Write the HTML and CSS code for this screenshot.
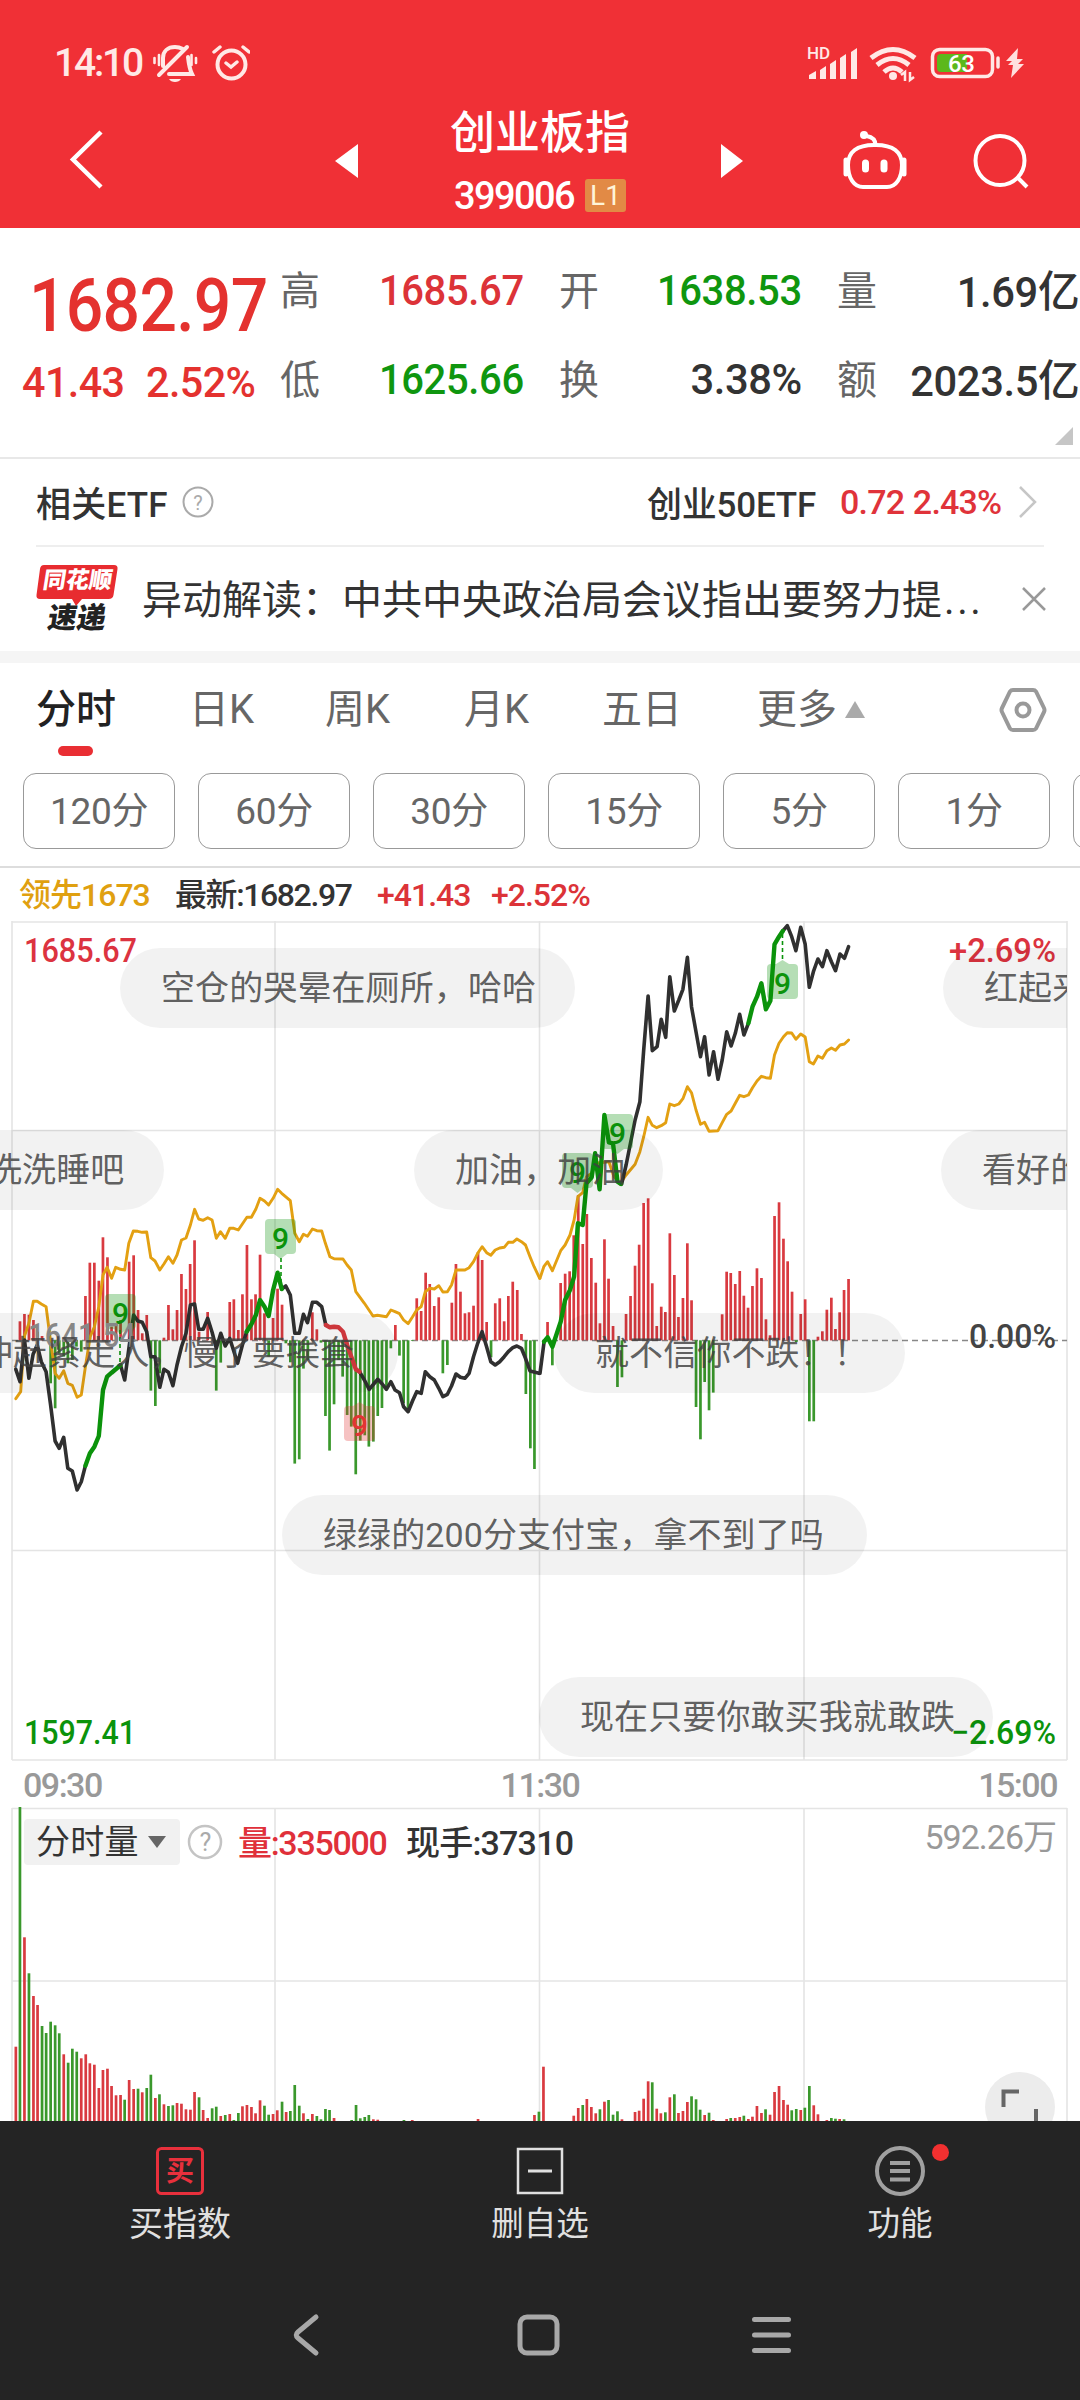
FILE: index.html
```html
<!DOCTYPE html>
<html lang="zh-CN">
<head>
<meta charset="utf-8">
<title>创业板指 399006</title>
<link rel="stylesheet" href="styles.css">
</head>
<body>
<header class="header">
  <div class="status">
    <span class="clock">14:10</span>
    <svg class="status-left" width="100" height="42" viewBox="150 42 100 42" fill="none" stroke="#ffe9e6" stroke-width="3.4" stroke-linecap="round">
      <path d="M163 66V58c0-7 5-11 12-11 3 0 6 1 8 2M188 57c1 9 2 13 4 17H169M159 75l28-28" stroke-width="4"/>
      <path d="M169 79h12c-2 4-10 4-12 0z" fill="#ffe9e6" stroke="none"/>
      <path d="M154.500 58v5M159 55v10M191.500 55v10M196 58v5" stroke-width="2.600"/>
      <circle cx="231.500" cy="64.500" r="14" stroke-width="4"/>
      <path d="M226 63l5 4 6-5M214 52l6-5M249 52l-6-5"/>
    </svg>
    <svg class="status-right" width="225" height="44" viewBox="802 42 225 44">
      <text x="807" y="59" class="hd" textLength="23">HD</text>
      <path fill="#ffe9e6" d="M809 79v-4l7-4v8zM820 79v-9l6-4v13zM830 79V64l6-4v19zM840 79V58l6-4v25zM851 79V52l6-4v31z"/>
      <g fill="none" stroke="#ffe9e6" stroke-width="5"><path d="M871 58q22-17 44 0"/><path d="M877 65q16-13 32 0"/><path d="M884 72q9-8 18 0"/></g>
      <circle cx="893" cy="76" r="4" fill="#ffe9e6"/>
      <path d="M901 75l4-3v9M910 72v8l4-3" stroke="#ffe9e6" stroke-width="2.500" fill="none"/>
      <rect x="932.500" y="49.500" width="60" height="27" rx="7" fill="none" stroke="#ffe9e6" stroke-width="3.500"/>
      <path d="M941 54h26v18h-26q-4 0-4-4v-10q0-4 4-4z" fill="#5cb81c"/>
      <text x="948" y="71.500" class="battery" textLength="27">63</text>
      <path d="M998 58v9" stroke="#ffe9e6" stroke-width="3.500" stroke-linecap="round"/>
      <path d="M1018 48l-12 13h6l-4 4h5l-2 13 13-14h-6l5-5h-6z" fill="#ffe0de"/>
    </svg>
  </div>
  <div class="titlebar">
    <svg class="back" width="36" height="62" viewBox="68 128 36 62" fill="none" stroke="#fff" stroke-width="4.500"><path d="M101 132L73 159.500 101 187"/></svg>
    <svg class="prev" width="24" height="36" viewBox="0 0 24 36"><path fill="#fff" d="M23 1v34L0 18z"/></svg>
    <div class="title">
      <h1>创业板指</h1>
      <div class="code"><span class="code-num">399006</span><span class="level">L1</span></div>
    </div>
    <svg class="next" width="24" height="36" viewBox="0 0 24 36"><path fill="#fff" d="M1 1v34l22-17z"/></svg>
    <svg class="robot" width="68" height="64" viewBox="841 128 68 64" fill="none" stroke="#fff" stroke-width="4">
      <path d="M848 165c0-13 9-20 26-20h2c17 0 26 7 26 20s-6 22-15 22h-24c-9 0-15-9-15-22z"/>
      <path d="M875.500 145c0-5-3-8-9-9"/><circle cx="864" cy="135" r="4" fill="#fff" stroke="none"/>
      <path d="M846 160v14M904 160v14" stroke-width="5" stroke-linecap="round"/>
      <path d="M865.500 163v6M884 163v6" stroke-width="7" stroke-linecap="round"/>
    </svg>
    <svg class="search" width="60" height="60" viewBox="970 131 60 60" fill="none" stroke="#fff" stroke-width="4"><circle cx="1000" cy="160.500" r="24.500"/><path d="M1017 177l10 10"/></svg>
  </div>
</header>

<section class="quote">
  <div class="last">
    <div class="price"><span class="num">1682.97</span></div>
    <div class="delta"><span class="num">41.43</span><span class="num">2.52%</span></div>
  </div>
  <dl class="stats">
    <div><dt>高</dt><dd class="up"><span class="num">1685.67</span></dd></div>
    <div><dt>开</dt><dd class="down"><span class="num">1638.53</span></dd></div>
    <div><dt>量</dt><dd><span class="num wide">1.69亿</span></dd></div>
    <div><dt>低</dt><dd class="down"><span class="num">1625.66</span></dd></div>
    <div><dt>换</dt><dd><span class="num wide">3.38%</span></dd></div>
    <div><dt>额</dt><dd><span class="num wide">2023.5亿</span></dd></div>
  </dl>
  <i class="corner"></i>
</section>

<section class="etf">
  <span class="etf-label">相关ETF</span>
  <svg width="32" height="32" viewBox="0 0 32 32"><circle cx="16" cy="16" r="14.500" fill="none" stroke="#aaa" stroke-width="2"/><text x="16" y="23.500" class="q">?</text></svg>
  <span class="etf-name">创业50ETF</span>
  <span class="etf-num">0.72 2.43%</span>
  <svg class="chev" width="20" height="34" viewBox="0 0 20 34" fill="none" stroke="#c6c6c6" stroke-width="2.500"><path d="M2 2l15 15L2 32"/></svg>
</section>

<section class="news">
  <div class="logo">
    <svg class="logo-box" width="82" height="42" viewBox="0 0 82 42"><path fill="#e82c30" d="M8 0h70q4 0 3.500 4l-4 26q-.5 4-5 4H46l-6 7-4-7H4q-4 0-3.500-4L4 4q.5-4 4-4z"/></svg>
    <b class="logo-top">同花顺</b><b class="logo-bottom">速递</b>
  </div>
  <p>异动解读：中共中央政治局会议指出要努力提<span class="dots">...</span></p>
  <svg class="close" width="24" height="24" viewBox="0 0 24 24" stroke="#999" stroke-width="2.500"><path d="M1 1l22 22M23 1L1 23"/></svg>
</section>

<nav class="tabs">
  <span class="tab active">分时</span><span class="tab">日K</span><span class="tab">周K</span><span class="tab">月K</span><span class="tab">五日</span>
  <span class="tab more">更多<i></i></span>
  <svg width="48" height="46" viewBox="0 0 48 46" fill="none" stroke="#999" stroke-width="4"><path d="M14 3h20q2 0 3 1.500l8 16.500q1 2 0 4l-8 16.500q-1 1.500-3 1.500H14q-2 0-3-1.500L3 25q-1-2 0-4l8-16.500Q12 3 14 3z"/><circle cx="24" cy="23" r="6.500"/></svg>
</nav>
<nav class="periods"><span>120分</span><span>60分</span><span>30分</span><span>15分</span><span>5分</span><span>1分</span><span></span></nav>

<main>
  <div class="legend">
    <span class="lead">领先1673</span><span class="newest">最新:1682.97</span><span class="chg">+41.43</span><span class="pct">+2.52%</span>
  </div>
  <div class="minute">
    <svg class="plot" id="minute" width="1080" height="840" viewBox="0 921 1080 840"></svg>
    <div class="danmaku">
      <span style="left:120px;top:27px;width:455px">空仓的哭晕在厕所，哈哈</span>
      <span style="left:943px;top:27px;width:300px">红起来</span>
      <span style="left:-53px;top:209px;width:217px">洗洗睡吧</span>
      <span style="left:414px;top:209px;width:249px">加油，加油</span>
      <span style="left:941px;top:209px;width:300px">看好的</span>
      <span style="left:-62px;top:392px;width:460px">冲赶紧走人，慢了要挨套</span>
      <span style="left:554px;top:392px;width:351px">就不信你不跌！！</span>
      <span style="left:282px;top:574px;width:585px">绿绿的200分支付宝，拿不到了吗</span>
      <span style="left:539px;top:756px;width:454px">现在只要你敢买我就敢跌</span>
    </div>
  </div>
  <div class="times"><span>09:30</span><span>11:30</span><span>15:00</span></div>
  <div class="volume">
    <svg class="plot" id="volume" width="1080" height="314" viewBox="0 1807 1080 314"></svg>
    <div class="volbar">
      <span class="select">分时量<i></i></span>
      <svg width="36" height="36" viewBox="0 0 36 36"><circle cx="18" cy="18" r="16" fill="none" stroke="#c4c4c4" stroke-width="2.500"/><text x="18" y="27" class="q big">?</text></svg>
      <span class="vol">量:335000</span><span class="hand">现手:37310</span><span class="max">592.26万</span>
    </div>
    <svg class="expand" width="70" height="70" viewBox="0 0 70 70"><circle cx="35" cy="35" r="35" fill="#ececec"/><path d="M18.500 35V19.500H34M51 37v15H36" fill="none" stroke="#666" stroke-width="4"/></svg>
  </div>
</main>

<footer class="footer">
  <div class="actions">
    <div class="action buy"><svg width="50" height="50" viewBox="0 0 50 50"><rect x="2.500" y="2.500" width="45" height="45" rx="4" fill="none" stroke="#e8303c" stroke-width="3"/><text x="25" y="35" class="buy-glyph">买</text></svg><span>买指数</span></div>
    <div class="action"><svg width="50" height="50" viewBox="0 0 50 50" fill="none" stroke="#e0e0e0"><rect x="3" y="3" width="44" height="44" stroke-width="2.500"/><path d="M13 25h24" stroke-width="3"/></svg><span>删自选</span></div>
    <div class="action"><svg width="50" height="50" viewBox="0 0 50 50" fill="none" stroke="#a0a0a0"><circle cx="25" cy="25" r="23" stroke-width="4"/><path d="M15 17h20M15 25h20M15 33.500h20" stroke-width="4"/></svg><span>功能</span><i class="dot"></i></div>
  </div>
  <div class="sysnav">
    <svg width="500" height="46" viewBox="292 2312 500 46" fill="none" stroke="#a8a8a8" stroke-width="5" stroke-linecap="round"><path d="M317 2317l-18 15q-3.500 3 0 6l18 15" stroke-linejoin="round"/><rect x="521" y="2317" width="37" height="36" rx="7"/><path d="M755.500 2319.500h34M755.500 2335h34M755.500 2350.500h34"/></svg>
  </div>
</footer>
<script src="chart.js"></script>
</body>
</html>
```
FILE: styles.css
```css
* { box-sizing: border-box; margin: 0; padding: 0; }
body { width: 1080px; height: 2400px; overflow: hidden; background: #fff; color: #333; font-family: Roboto, "Noto Sans CJK SC", sans-serif; display: flex; flex-direction: column; }
svg { display: block; flex: none; }
span, p { white-space: nowrap; }
.up { color: #dc3338; }
.down { color: #0f960f; }
.header { height: 228px; flex: none; background: #f03036; color: #fff; }
.status { height: 86px; padding: 42px 53px 0 54px; display: flex; align-items: flex-start; }
.clock { font-size: 39px; line-height: 43px; letter-spacing: -2.2px; color: #ffe9e6; width: 96px; font-weight: 500; }
.status-right { margin-left: auto; }
.hd { font: 500 17px Roboto; fill: #ffe9e6; }
.battery { font: 500 24px Roboto; fill: #fff; }
.titlebar { height: 142px; display: flex; align-items: flex-start; }
.back { margin: 42px 0 0 68px; }
.prev { margin: 57px 0 0 231px; }
.title { width: 362px; text-align: center; margin-top: 21px; }
.title h1 { font-size: 45px; line-height: 54px; font-weight: 500; }
.code { display: flex; justify-content: center; align-items: center; gap: 11px; height: 32px; margin-top: 18px; }
.code-num { font-size: 38px; letter-spacing: -1.6px; font-weight: 500; line-height: 32px; position: relative; top: 1px; }
.level { width: 41px; height: 33px; border-radius: 3px; background: #e28a45; font-size: 28px; line-height: 33px; color: #fff4d8; }
.next { margin: 57px 0 0 -1px; }
.robot { margin: 42px 0 0 97px; }
.search { margin: 45px 0 0 61px; }
.quote { height: 231px; flex: none; border-bottom: 2px solid #e8e8e8; display: flex; position: relative; }
.last { width: 280px; color: #e4322f; font-weight: 500; }
.num { display: inline-block; transform: scaleX(.93); transform-origin: right; }
.num.wide { transform: scaleX(.97); }
.price { height: 108px; margin-top: 23px; padding-left: 29px; font-size: 75px; line-height: 108px; letter-spacing: -.8px; }
.price .num { transform: scaleX(.88); transform-origin: left; }
.delta { display: flex; height: 46px; line-height: 46px; font-size: 43px; padding-left: 22px; gap: 17px; }
.delta .num { transform: scaleX(.96); transform-origin: left; letter-spacing: -.6px; }
.stats { width: 800px; display: grid; grid-template-columns: 243px 278px 279px; column-gap: 0; grid-template-rows: 89px 89px; padding-top: 17px; }
.stats div { display: flex; justify-content: space-between; align-items: center; }
.stats div:nth-child(3n+2) { padding-left: 36px; }
.stats div:nth-child(3n) { padding-left: 36px; }
.stats dt { font-size: 40px; color: #666; position: relative; top: -2px; }
.stats dd { font-size: 43px; font-weight: 500; letter-spacing: -.4px; margin-right: -1px; }
.stats div:nth-child(3n) dd { margin-right: 1px; position: relative; top: -2px; }
.corner { position: absolute; right: 7px; bottom: 12px; border-left: 18px solid transparent; border-bottom: 18px solid #c6c6c6; }
.etf { height: 88px; flex: none; margin: 0 36px; border-bottom: 2px solid #eee; display: flex; align-items: center; font-size: 34px; }
.etf-label { width: 146px; }
.etf-label, .etf-name { font-weight: 500; font-size: 35px; letter-spacing: .2px; position: relative; top: -1px; }
.etf-name { margin-left: auto; letter-spacing: -.2px; }
.etf-num { color: #e0333a; font-weight: 500; width: 158px; margin-left: 24px; letter-spacing: -.8px; word-spacing: 1px; }
.chev { margin: 0 6px 0 20px; }
.news { height: 116px; flex: none; border-bottom: 12px solid #f5f5f5; display: flex; align-items: center; padding-left: 36px; }
.logo { width: 82px; height: 70px; position: relative; display: flex; flex-direction: column; align-items: center; }
.logo-box { position: absolute; left: 0; top: 1px; }
.logo b { position: relative; transform: skewX(-9deg); font-weight: 900; white-space: nowrap; }
.logo-top { color: #fff; font-size: 23px; line-height: 34px; }
.logo-bottom { color: #222; font-size: 29px; line-height: 32px; margin-top: 4px; }
.news p { font-size: 40px; margin: -5px 0 0 24px; width: 840px; }
.dots { letter-spacing: 2.6px; margin-left: 2px; }
.close { margin-left: 40px; }
.tabs { height: 92px; flex: none; display: flex; align-items: center; padding-left: 36px; font-size: 40px; color: #666; }
.tab { height: 92px; line-height: 93px; width: 137px; position: relative; }
.tab:nth-child(1) { width: 153px; }
.tab:nth-child(2) { width: 136px; }
.tab:nth-child(3) { width: 139px; }
.tab:nth-child(4) { width: 138px; }
.tab:nth-child(5) { width: 155px; }
.tab.active { color: #222; font-weight: 500; }
.tab.active::after { content: ""; position: absolute; left: 22px; bottom: -1px; width: 35px; height: 10px; border-radius: 5px; background: #e92e33; }
.more { width: 241px; display: flex; align-items: center; gap: 8px; }
.more i { border: 10px solid transparent; border-top: 0; border-bottom: 17px solid #aaa; }
.tabs svg { position: relative; left: 1px; top: 1px; }
.periods { height: 113px; flex: none; border-bottom: 2px solid #ddd; display: flex; gap: 23px; padding: 18px 0 0 23px; overflow: hidden; }
.periods span { width: 152px; height: 76px; flex: none; border: 1.5px solid #999; border-radius: 13px; text-align: center; font-size: 37px; line-height: 75px; color: #666; letter-spacing: -.3px; }
main { flex: none; height: 1253px; overflow: hidden; }
.legend { height: 53px; display: flex; align-items: center; padding-left: 19px; font-size: 32px; line-height: 54px; letter-spacing: -1px; font-weight: 500; }
.lead { width: 156px; color: #e0a010; }
.newest { width: 202px; letter-spacing: -1.4px; }
.chg { width: 114px; }
.chg, .pct { color: #dc3338; }
.minute, .volume { position: relative; }
.minute { height: 840px; }
.plot text { font-family: Roboto, "Noto Sans CJK SC", sans-serif; font-size: 34px; font-weight: 500; }
.danmaku { position: absolute; left: 0; top: 0; width: 1067px; height: 840px; overflow: hidden; }
.danmaku span { position: absolute; height: 80px; line-height: 80px; padding-left: 41px; border-radius: 40px; background: rgba(0,0,0,.05); color: rgba(64,64,64,.84); font-size: 34px; letter-spacing: .1px; }
.times { height: 46px; padding: 0 23px 0 23px; display: flex; justify-content: space-between; font-size: 34px; line-height: 48px; letter-spacing: -1.5px; color: #999; font-weight: 500; }
.volume { height: 314px; }
.volbar { position: absolute; left: 24px; top: 12px; width: 1032px; height: 46px; display: flex; align-items: center; font-size: 34px; font-weight: 500; letter-spacing: -.8px; }
.select { width: 156px; height: 46px; line-height: 46px; border-radius: 4px; background: #f1f1f1; display: flex; align-items: center; gap: 9px; padding-left: 12px; margin-right: 7px; letter-spacing: .2px; font-weight: 400; }
.select i { border: 9px solid transparent; border-bottom: 0; border-top: 12px solid #666; }
.vol, .hand { position: relative; top: -2px; }
.vol { color: #e0303a; margin-left: 15px; width: 168px; letter-spacing: -1.3px; }
.max { margin-left: auto; color: #999; font-weight: 400; position: relative; top: -8px; letter-spacing: -1px; }
.q { font: 20px Roboto; fill: #aaa; text-anchor: middle; }
.plot + .volbar .big { font-size: 25px; }
.expand { position: absolute; left: 985px; top: 265px; }
.footer { flex: 1; background: #242424; color: #e0e0e0; }
.actions { height: 150px; display: grid; grid-template-columns: 360px 360px 360px; }
.action { display: flex; flex-direction: column; align-items: center; padding-top: 25px; font-size: 32.5px; line-height: 50px; gap: 3px; position: relative; }
.action.buy { font-size: 34px; }
.buy-glyph { font: 700 28px "Noto Sans CJK SC"; fill: #e8303c; text-anchor: middle; }
.dot { position: absolute; left: 212px; top: 23px; width: 17px; height: 17px; border-radius: 50%; background: #f23030; }
.sysnav { padding: 41px 0 0 291px; }
```
FILE: chart.js
```js
const RED = '#d93a40', GREEN = '#3a982c', DARK = '#303030', GOLD = '#e3a012', BUY = '#0b930b';
const SX = 540 / 1568, SY = 1 / 3;

// Samples are stored on a fine grid; each half of the session has its own origin.
const px = (ox, x) => (ox + x * SX).toFixed(1);
const py = (oy, y) => (oy + y * SY).toFixed(1);

function line(ox, oy, pts, color, w) {
  const p = pts.split(' ').map(s => { const [x, y] = s.split(','); return px(ox, +x) + ',' + py(oy, +y); }).join(' ');
  return `<polyline points="${p}" fill="none" stroke="${color}" stroke-width="${w}" stroke-linejoin="round" stroke-linecap="round"/>`;
}
function bars(ox, oy, base, data, w = 2.7) {
  let color = RED;
  return data.split(' ').map(s => {
    if (s[0] === 'r') { color = RED; s = s.slice(1); }
    if (s[0] === 'g') { color = GREEN; s = s.slice(1); }
    const [x, y] = s.split(':').map(Number);
    const a = Math.min(y, base), b = Math.max(y, base);
    return `<rect x="${(ox + x * SX - w / 2).toFixed(1)}" y="${py(oy, a)}" width="${w}" height="${((b - a) * SY).toFixed(1)}" fill="${color}"/>`;
  }).join('');
}
const rule = (x1, y1, x2, y2, c = '#e4e4e4', extra = '') => `<path d="M${x1} ${y1}L${x2} ${y2}" stroke="${c}" stroke-width="1.6" ${extra}/>`;
const label = (x, y, len, color, t) => `<text x="${x}" y="${y}" fill="${color}" textLength="${len}" lengthAdjust="spacingAndGlyphs">${t}</text>`;
function nine(x, y, down, color = BUY) {
  const tip = down ? `M${x + 9} ${y + 35}l6.5 5 6.5-5z` : `M${x + 9} ${y}l6.500-4 6.500 4z`;
  return `<g><rect x="${x}" y="${y}" width="31" height="35" rx="4" fill="${color}" opacity=".3"/><path d="${tip}" fill="${color}" opacity=".3"/><text x="${x + 7}" y="${y + 30}" style="font-size:30px" fill="${color}">9</text></g>`;
}

let m = '';
for (const x of [12, 275, 539.5, 804, 1067]) m += rule(x, 921, x, 1760);
for (const y of [922, 1130.5, 1550.5, 1760]) m += rule(12, y, 1067, y);
m += rule(12, 1340.5, 1067, 1340.5, '#888', 'stroke-dasharray="6 4"');
m += bars(0, 1160, 541, 'r58:484 71:462 84:464 97:480 109:515 122:528 g147:670 160:745 172:580 185:590 197:610 210:600 222:560 236:575 r248:408 261:308 274:308 287:362 299:232 312:292 324:500 337:490 350:480 375:305 388:286 401:450 413:520 426:465 g438:692 451:738 464:640 r476:533 489:435 502:508 514:450 527:342 540:387 552:312 565:241 578:515 603:456 g628:692 641:608 r667:426 679:418 692:510 704:403 717:255 730:418 742:403 755:284 768:460 793:474 806:386 819:434 g780:590 830:550 843:607 856:911 869:898 881:626 894:600 r907:457 920:508 g932:548 945:768 957:872 970:733 983:600 995:650 1008:765 1020:800 1033:943 1046:842 1059:826 1071:860 1084:845 1097:768 1109:744 1122:690 1135:565 r1148:495 g1160:587 1172:730 1185:745 1197:543 r1210:415 1223:453 1236:338 1248:372 1261:438 1274:412 g1286:640 1299:615 r1312:428 1324:312 1337:395 1350:460 1362:457 1375:437 1388:277 1400:300 1413:486 g1426:592 r1438:430 1451:415 1464:484 1476:408 1489:365 1502:390 1514:522 g1527:702 1540:865 1552:927');
m += bars(540, 900, 1321, 'r22:1266 g36:1396 r60:1149 73:1121 86:1114 98:1006 111:885 124:1032 136:942 149:1074 162:1148 174:1270 187:1018 199:1136 212:1278 g225:1461 238:1432 r250:1242 263:1188 276:1097 288:1034 301:909 314:895 326:1150 339:1278 352:1220 364:1236 377:1000 390:1125 402:1251 415:1194 428:1030 440:1201 g453:1521 466:1618 478:1446 491:1531 503:1478 r529:1243 542:1115 554:1119 567:1152 580:1113 592:1187 604:1223 617:1158 630:1105 643:1134 656:1258 668:1306 681:948 694:907 707:1016 719:1084 732:1175 757:1242 770:1198 g744:1326 782:1564 795:1564 r807:1310 820:1294 833:1229 846:1193 858:1287 870:1237 883:1170 896:1137');
m += line(0, 1160, '46,716 60,695 71,528 84,490 97,424 108,424 120,432 134,440 147,545 160,640 172,655 185,632 197,670 210,676 224,712 236,705 248,620 262,530 274,500 287,440 299,345 311,322 324,355 336,322 350,328 362,330 374,250 387,213 400,214 413,217 426,216 438,293 450,303 464,330 476,312 489,290 502,310 514,285 527,240 540,234 553,195 565,148 577,177 590,181 603,173 616,180 628,235 640,215 654,235 667,205 679,205 692,210 717,172 730,172 743,147 755,115 768,123 780,135 793,115 806,88 818,100 843,122 856,220 869,245 881,223 893,229 907,207 920,212 934,213 945,250 958,290 970,296 996,297 1008,315 1020,330 1033,395 1058,430 1083,468 1096,466 1122,470 1135,450 1147,455 1160,461 1172,480 1185,491 1198,470 1210,450 1223,440 1235,395 1248,385 1261,387 1274,377 1286,396 1299,395 1311,375 1324,330 1350,330 1362,323 1375,305 1387,280 1400,260 1413,278 1425,286 1438,270 1451,264 1464,262 1476,247 1489,247 1501,237 1514,245 1526,255 1539,290 1551,320 1567,355', GOLD, 2.9);
m += line(540, 900, '0,1135 11,1100 22,1085 36,1112 60,1052 73,1035 87,1005 99,960 110,890 124,878 135,830 150,820 160,790 200,785 215,830 232,852 250,825 276,793 290,755 301,710 314,652 326,676 339,683 352,677 365,668 377,612 390,617 403,612 415,596 428,560 440,578 453,630 466,673 478,667 491,694 504,693 517,692 529,668 542,643 555,633 567,610 580,586 592,590 605,585 617,563 630,543 643,529 656,533 669,535 681,465 694,430 707,410 718,398 731,399 743,418 757,402 770,411 782,485 794,492 807,468 820,475 833,452 846,444 858,451 871,435 884,432 896,420', GOLD, 2.9);
m += rule(281, 1258, 281, 1292, BUY, 'stroke-dasharray="4 3"') + rule(120, 1330, 120, 1364, BUY, 'stroke-dasharray="4 3"') + rule(782.5, 934, 782.5, 960, BUY, 'stroke-dasharray="4 3"');
[
  ['46,628 58,665 71,540 84,655 96,583 108,555 120,605 134,635 147,735 160,843 172,865 185,832 197,925 210,933 224,990 236,965 248,917', DARK],
  ['350,615 362,660 375,560 388,465 400,483 413,487 426,515 438,590 450,590 464,682 476,628 489,637 502,677 514,615 527,560 540,520 553,435 565,432 577,508 590,508 603,475 616,517 628,565 641,520 654,558 667,535 690,610 704,555 716,515', DARK],
  ['818,387 830,378 843,405 856,520 869,520 881,463 893,488 907,427 920,427 934,440 946,495', DARK],
  ['1044,635 1058,660 1072,688 1085,672 1097,658 1110,672 1122,688 1135,665 1147,690 1160,698 1172,740 1185,755 1198,722 1210,695 1223,700 1235,635 1248,650 1261,660 1274,685 1286,710 1299,703 1311,678 1324,642 1337,652 1350,655 1362,640 1375,590 1387,550 1400,515 1413,560 1425,605 1438,615 1451,605 1464,590 1476,575 1489,563 1501,558 1514,565 1526,595 1539,633 1551,636 1565,640', DARK],
  ['248,917 261,880 274,860 287,828 299,690 311,650 324,638 336,628 350,615', BUY],
  ['716,515 730,493 743,465 755,420 768,440 780,468 793,390 806,338 818,387', BUY],
  ['946,495 958,502 970,500 983,502 996,515 1008,555 1020,590 1033,628 1044,635', RED]
].forEach(([p, c]) => { m += line(0, 1160, p, c, c === DARK ? 3.6 : 4.4); });
[
  ['0,1420 12,1325', DARK],
  ['237,852 250,795 276,660 290,605 301,450 314,288 326,452 340,440 352,358 365,412 377,230 390,333 403,300 415,268 428,172 440,320 453,395 466,470 478,410 491,525 504,455 517,538 529,480 542,395 555,438 567,400 580,343 592,405 605,370', DARK],
  ['705,93 718,77 731,110 743,152 757,82 770,133 782,262 794,215 807,177 820,200 833,152 846,185 858,212 871,162 884,175 896,140', DARK],
  ['12,1325 22,1312 36,1340 60,1265 73,1200 87,1170 99,1130 110,970 124,975 135,850 150,832 160,760 173,868 187,645 200,727 212,730 225,845 235,852', BUY],
  ['605,370 617,320 630,290 643,250 656,328 669,302 681,133 694,110 705,93', BUY]
].forEach(([p, c]) => { m += line(540, 900, p, c, c === DARK ? 3.6 : 4.4); });
m += nine(105, 1294, true) + nine(265, 1219, true) + nine(344, 1406, false, '#e23434') + nine(767, 964, false) + nine(602, 1114, true) + nine(562, 1153, true);
m += label(24, 962, 113, '#dc3340', '1685.67') + label(949, 962, 107, '#dc3340', '+2.69%');
m += label(24, 1744, 112, BUY, '1597.41') + label(951, 1744, 105, BUY, '−2.69%');
m += label(28, 1347, 108, '#8f8f8f', '1641.54') + label(969, 1348, 87, '#444', '0.00%');
document.getElementById('minute').innerHTML = m;

let v = '';
for (const x of [12, 275, 539.5, 804, 1067]) v += rule(x, 1808, x, 2121);
v += rule(12, 1808.5, 1067, 1808.5) + rule(12, 1981, 1067, 1981);
v += bars(0, 1780, 1023, 'r46:800 g58:80 r71:472 g84:580 r97:648 109:675 g122:738 134:759 147:725 160:736 172:760 r185:823 g198:848 210:806 223:815 r236:835 249:823 261:850 274:854 287:924 299:870 312:866 324:918 337:946 350:945 g362:959 r375:900 388:927 g401:926 r413:937 g426:924 438:884 r451:954 g463:943 r476:973 g489:978 502:976 r514:969 527:971 540:988 553:989 565:936 g578:952 r590:990 603:1014 g616:985 628:980 r641:1008 g654:1005 r667:1002 g679:1020 692:999 r704:979 717:975 730:981 742:1000 755:961 g768:977 780:1004 r793:1002 805:991 g819:965 r831:996 g843:993 856:915 869:977 r881:1000 g894:1017 r907:1002 g920:1008 932:1018 945:987 957:990 r970:1014 g1021:1020 1034:975 1046:1015 1059:1011 1071:1005 r1084:1018 1097:1019 g1173:1020 r1197:1020 1388:1017 1552:1005 g1565:995');
v += bars(540, 1780, 1023, 'r10:860 98:1007 111:984 g124:975 r136:957 149:981 162:1000 g174:988 r187:965 g199:960 212:1004 225:994 r238:1018 276:996 288:992 301:956 314:904 g326:907 r339:986 351:1000 g364:997 r377:952 g390:943 r402:999 415:993 428:966 g440:949 453:958 465:989 r478:1005 g491:998 r503:1020 542:1017 g554:1014 r567:1014 580:1011 g592:1007 r605:1017 617:1010 630:978 643:999 g655:988 r668:1004 681:936 694:918 707:960 719:974 g731:991 744:987 r757:990 g769:983 782:918 r795:976 807:1003 833:1020 g846:1014 858:1016 r870:1017 g883:1018');
document.getElementById('volume').innerHTML = v;
```
